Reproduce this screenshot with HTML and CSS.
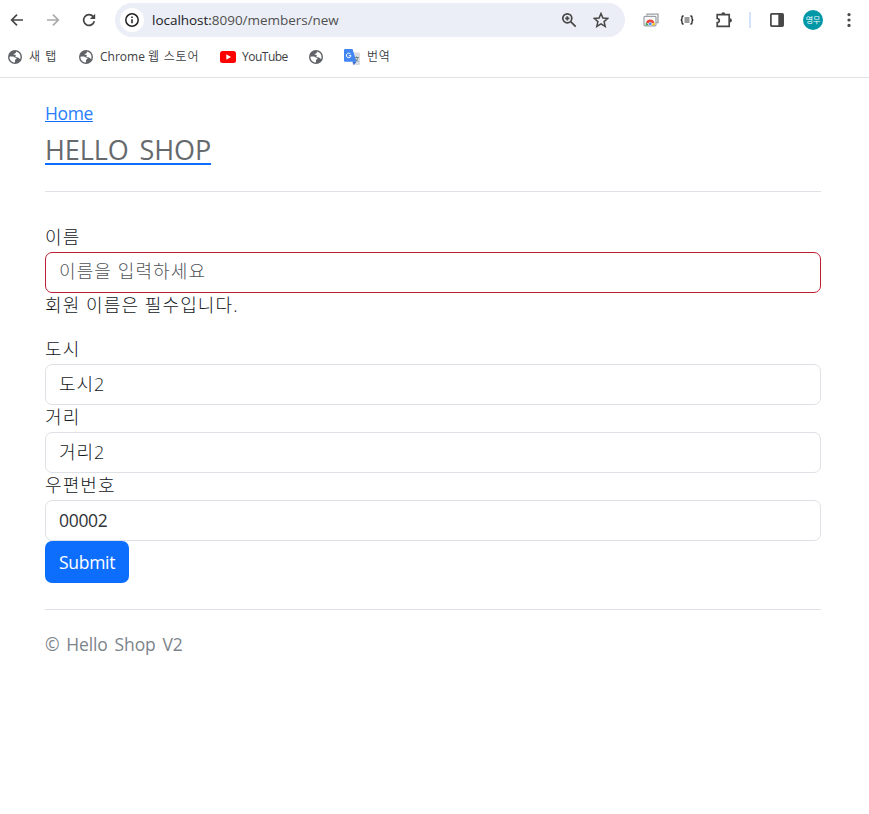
FILE: index.html
```html
<!DOCTYPE html>
<html lang="ko">
<head>
<meta charset="utf-8">
<title>Hello Shop</title>
<link rel="stylesheet" href="styles.css">
</head>
<body>
<svg class="defs" aria-hidden="true">
  <symbol id="globe" viewBox="0 0 24 24"><circle cx="12" cy="12" r="12" fill="#5f6368"/><path d="M2.500 11.500c3-.2 6.500-.6 8.300.8 1.500 1.200 3.500.5 3.800 2 .3 1.700-2.300 1.600-2.500 3.200-.1 1 .3 2.400-.6 3.900C6.500 21.300 2.300 17 2.500 11.500zM13.500 2.600c4.600.7 8 4.700 8 9.400 0 1.200-.2 2.300-.6 3.300-1.300-.3-1.900-1.800-3.300-2.200-1.700-.4-3.400.2-4.500-1.200-.9-1.300.6-2.200.1-3.100-.8-1.200-2.900.2-3.500-1.200-.4-1.200 1.200-1.500 2.300-1.800 1.500-.4 1.900-1.700 1.500-3.200z" fill="#fff"/></symbol>
</svg>
<header class="browser">
  <div class="toolbar">
    <svg class="icon back" viewBox="0 0 16 16"><path d="M14 8H3M8 2.700 2.700 8 8 13.300"/></svg>
    <svg class="icon forward" viewBox="0 0 16 16"><path d="M2 8h11M8 2.700 13.300 8 8 13.300"/></svg>
    <svg class="icon reload" viewBox="0 0 16 16"><path d="M13.300 9.200A5.400 5.400 0 1 1 12.200 4.600L13.500 6"/><path d="M14.200 1.700v5.400H8.800z" class="solid"/></svg>
    <div class="address">
      <span class="info"><svg class="icon" viewBox="0 0 16 16"><circle cx="8" cy="8" r="6.200"/><path d="M8 7.300v4M8 4.500v1.600"/></svg></span>
      <span class="url"><b>localhost:</b>8090/members/new</span>
      <svg class="icon zoom" viewBox="0 0 16 16"><circle cx="6.300" cy="6.300" r="4.500"/><path d="m9.700 9.700 5 5M6.300 4.200v4.200M4.200 6.300h4.200"/></svg>
      <svg class="icon star" viewBox="0 0 16 16"><path d="m8 1.500 1.900 4.500 4.900.4-3.700 3.200 1.100 4.800L8 11.900l-4.200 2.500 1.100-4.800L1.200 6.400l4.900-.4z"/></svg>
    </div>
    <svg class="gallery" viewBox="0 0 16 16"><path d="M4 3.500V2.200h11v8.300h-1.500" fill="none" stroke="#9aa0a6" stroke-width="1.300"/><rect x="1" y="4.300" width="12" height="9.500" rx="1" fill="#f8f9fa" stroke="#9aa0a6" stroke-width="1.200"/><path d="M3 10.500a4.400 4.400 0 0 1 8.400 0L9 11.500H5z" fill="#ea4335"/><path d="M3 10.200 5.800 13.200H2.700q-.3-1.700.3-3z" fill="#34a853"/><path d="M11.400 10.200q.6 1.300.3 3H8.500z" fill="#fbbc04"/><circle cx="7.200" cy="11.900" r="1.700" fill="#4285f4" stroke="#fff" stroke-width=".5"/></svg>
    <svg class="icon braces" viewBox="0 0 16 16"><path d="M4.600 4H4Q3 4 3 5.200v1.300Q3 8 1.700 8 3 8 3 9.500v1.300Q3 12 4 12h.6M11.400 4h.6q1 0 1 1.200v1.300Q13 8 14.300 8 13 8 13 9.500v1.300q0 1.200-1 1.200h-.6"/><path class="thin" d="M5.500 6h5M5.500 8h5M5.500 10h5"/></svg>
    <svg class="icon puzzle" viewBox="0 0 18 18"><path d="M2.200 3.700h12v11.700h-12v-3.700q2.100-.2 2.100-2.100T2.200 7.500z"/><path class="solid" d="M6.300 3.200a2 2 0 0 1 4 0zM14.800 7.300a2 2 0 0 1 0 4.200z"/></svg>
    <i class="divider"></i>
    <svg class="icon panel" viewBox="0 0 16 16"><rect x="1.900" y="1.900" width="12.200" height="12.200" rx=".8"/><path class="solid" d="M9.300 2h5v12h-5z"/></svg>
    <span class="avatar">영무</span>
    <svg class="icon menu" viewBox="0 0 16 16"><circle class="solid" cx="8" cy="2.600" r="1.600"/><circle class="solid" cx="8" cy="8" r="1.600"/><circle class="solid" cx="8" cy="13.400" r="1.600"/></svg>
  </div>
  <nav class="bookmarks">
    <a class="bm newtab"><svg><use href="#globe"/></svg><span>새 탭</span></a>
    <a class="bm store"><svg><use href="#globe"/></svg><span>Chrome <em>웹 스토어</em></span></a>
    <a class="bm youtube"><svg viewBox="0 0 16 12"><rect width="16" height="12" rx="2.500" fill="#f00"/><path d="M6.300 3.300v5.400L11 6z" fill="#fff"/></svg><span>YouTube</span></a>
    <a class="bm blank"><svg><use href="#globe"/></svg></a>
    <a class="bm translate"><svg viewBox="0 0 16 16"><path d="M5 3.500h10q1 0 1 1V15q0 1-1 1H9z" fill="#dadce0"/><path d="M1 0h7.500l4 12.800H1q-1 0-1-1V1q0-1 1-1z" fill="#4285f4"/><path d="m8.700 12.800h3.800L9.700 16z" fill="#3367d6"/><path d="M6.500 5A2.300 2.300 0 1 0 7 6.700H4.800" fill="none" stroke="#fff" stroke-width="1"/><path d="M10.500 8.500h4.500M12.700 7.300v1.200m1.300 0q-.5 2.500-2.500 4m-.3-3q1 2 3.300 3" fill="none" stroke="#607d8b" stroke-width=".8"/></svg><span>번역</span></a>
  </nav>
</header>
<main class="container">
  <div class="home"><a href="#">Home</a></div>
  <a class="brand" href="#"><h3>HELLO SHOP</h3></a>
  <hr>
  <form>
    <div class="group">
      <label for="name">이름</label>
      <input id="name" class="field invalid" placeholder="이름을 입력하세요">
      <p class="error">회원 이름은 필수입니다.</p>
    </div>
    <div class="group">
      <label for="city">도시</label>
      <input id="city" class="field" value="도시2">
      <label for="street">거리</label>
      <input id="street" class="field" value="거리2">
      <label for="zip">우편번호</label>
      <input id="zip" class="field zip" value="00002">
    </div>
    <button type="button">Submit</button>
  </form>
  <hr class="bottom">
  <footer>© Hello Shop V2</footer>
</main>
</body>
</html>
```
FILE: styles.css
```css
* { box-sizing: border-box; }
body {
  margin: 0;
  background: #fff;
  color: #111518;
  font: 300 18px/27px "Open Sans", "Noto Sans CJK KR", sans-serif;
  overflow: hidden;
}
.defs { position: absolute; width: 0; height: 0; }

.browser { height: 78px; border-bottom: 1px solid #dfe1e5; }
.toolbar { display: flex; align-items: center; height: 40px; padding-left: 9px; }
.icon { width: 16px; height: 16px; flex: none; fill: none; stroke: #474747; stroke-width: 1.7; }
.icon .solid { fill: #474747; stroke: none; }
.forward { margin-left: 20px; stroke: #aaa; }
.reload { margin-left: 20px; }
.address {
  display: flex;
  align-items: center;
  width: 510px;
  height: 34px;
  margin-left: 18px;
  padding: 0 16px 0 5px;
  border-radius: 17px;
  background: #ebeef6;
}
.info { display: flex; align-items: center; justify-content: center; width: 24px; height: 24px; border-radius: 50%; background: #fff; }
.info .icon { stroke: #222; stroke-width: 1.5; }
.url { flex: 1; margin-left: 8px; color: #505050; font-size: 13.5px; font-weight: 400; line-height: 20px; letter-spacing: -.03px; white-space: nowrap; }
.url b { color: #202124; font-weight: inherit; }
.star { margin-left: 16px; stroke-width: 1.5; }
.gallery { width: 16px; height: 16px; margin-left: 18px; }
.braces { margin-left: 20px; stroke: #222; stroke-width: 1.3; }
.braces .thin { stroke-width: .9; }
.puzzle { width: 18px; height: 18px; margin-left: 20px; }
.divider { width: 2px; height: 16px; margin-left: 16px; background: #d3e3fd; }
.panel { margin-left: 18px; }
.avatar { width: 20px; height: 20px; margin-left: 18px; border-radius: 50%; background: #0097a7; color: #fff; font-size: 8px; font-weight: 400; line-height: 19px; text-align: center; }
.menu { margin-left: 18px; }

.bookmarks { display: flex; align-items: center; height: 34px; padding-left: 8px; }
.bm { display: flex; align-items: center; color: #3c4043; font-size: 12px; font-weight: 350; line-height: 18px; text-decoration: none; white-space: nowrap; }
.bm svg { width: 14px; height: 14px; flex: none; }
.bm span { margin-left: 7px; }
.newtab { width: 71px; letter-spacing: 1px; }
.store { width: 141px; font-weight: 400; }
.store em { font-style: normal; font-weight: 350; letter-spacing: .8px; }
.youtube { width: 89px; font-weight: 400; letter-spacing: -.5px; }
.youtube svg { width: 16px; height: 12px; }
.youtube span { margin-left: 6px; }
.blank { width: 35px; }
.translate { letter-spacing: .8px; }
.translate svg { width: 16px; height: 16px; }

.container { padding: 22px 48px 0 45px; }
.home { height: 30px; font-size: 17.500px; font-weight: 400; letter-spacing: -.4px; }
a { color: #0d6efd; }
.home a { color: #287efd; text-decoration-color: #0d6efd; }
.brand { display: block; height: 61px; text-decoration-thickness: 2px; text-underline-offset: 3px; }
h3 { display: inline; margin: 0; color: #666a6d; font-size: 27px; font-weight: 400; line-height: 40px; letter-spacing: -.1px; word-spacing: 4px; }
hr { height: 1px; margin: 0; border: 0; background: #dee2e6; }
form { padding-top: 32px; }
.group:first-child { margin-bottom: 16px; }
label, .error { display: block; height: 27px; margin: 0; letter-spacing: 1.1px; line-height: 25px; }
label:first-child { height: 28px; line-height: 27px; }
.field {
  display: block;
  width: 100%;
  height: 41px;
  padding: 0 13px 3px;
  border: 1px solid #dee2e6;
  border-radius: 7px;
  background: #fff;
  color: #111518;
  font: inherit;
  letter-spacing: .9px;
}
.zip { padding-bottom: 1px; color: #303438; font-size: 17.500px; font-weight: 400; letter-spacing: -.3px; }
.invalid { border-color: #bd1e33; letter-spacing: 1.1px; }
.field::placeholder { color: #505457; opacity: 1; }
button { display: block; width: 84px; height: 42px; padding: 0 0 0 14px; border: 0; border-radius: 7px; background: #0d6efd; color: #fff; font: 400 17.500px/27px "Open Sans", sans-serif; letter-spacing: -.3px; text-align: left; }
.bottom { margin-top: 26px; }
footer { margin-top: 21px; color: #7c848b; font-size: 17.500px; font-weight: 400; letter-spacing: -.1px; word-spacing: 2.300px; }
```
